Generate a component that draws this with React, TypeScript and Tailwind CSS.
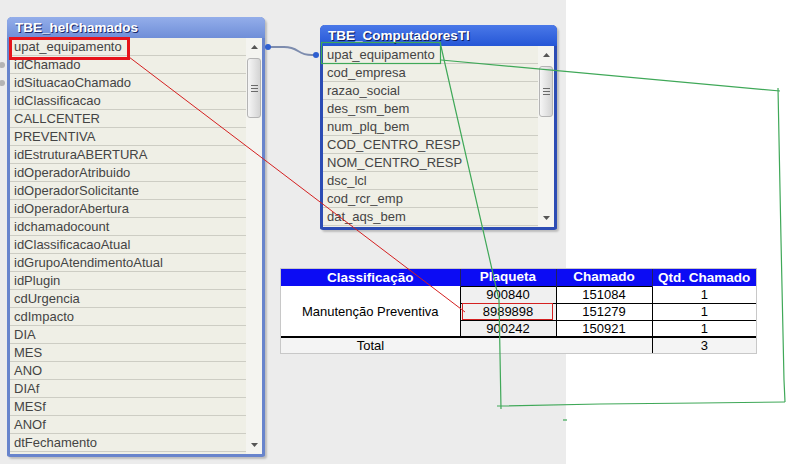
import React from 'react';

const helFields = [
  'upat_equipamento',
  'idChamado',
  'idSituacaoChamado',
  'idClassificacao',
  'CALLCENTER',
  'PREVENTIVA',
  'idEstruturaABERTURA',
  'idOperadorAtribuido',
  'idOperadorSolicitante',
  'idOperadorAbertura',
  'idchamadocount',
  'idClassificacaoAtual',
  'idGrupoAtendimentoAtual',
  'idPlugin',
  'cdUrgencia',
  'cdImpacto',
  'DIA',
  'MES',
  'ANO',
  'DIAf',
  'MESf',
  'ANOf',
  'dtFechamento',
];

const compFields = [
  'upat_equipamento',
  'cod_empresa',
  'razao_social',
  'des_rsm_bem',
  'num_plq_bem',
  'COD_CENTRO_RESP',
  'NOM_CENTRO_RESP',
  'dsc_lcl',
  'cod_rcr_emp',
  'dat_aqs_bem',
];

const rows = [
  { plaqueta: '900840', chamado: '151084', qtd: '1' },
  { plaqueta: '8989898', chamado: '151279', qtd: '1' },
  { plaqueta: '900242', chamado: '150921', qtd: '1' },
];

function Arrow({ down }: { down?: boolean }) {
  return (
    <svg width="7" height="4" viewBox="0 0 7 4">
      {down ? <polygon points="0,0 7,0 3.5,4" fill="#555" /> : <polygon points="0,4 7,4 3.5,0" fill="#555" />}
    </svg>
  );
}

function Scrollbar({ thumbClass }: { thumbClass: string }) {
  return (
    <div className="w-[16px] shrink-0 flex flex-col bg-[#f4f4f0]">
      <div className="h-[18px] flex items-center justify-center">
        <Arrow />
      </div>
      <div className={`mx-[1px] mt-[2px] rounded-[3px] border border-[#b4b4b4] bg-gradient-to-r from-[#f6f6f6] to-[#d4d4d4] flex flex-col items-center justify-center gap-[2px] ${thumbClass}`}>
        <div className="w-[7px] h-px bg-[#6a6a6a]" />
        <div className="w-[7px] h-px bg-[#6a6a6a]" />
        <div className="w-[7px] h-px bg-[#6a6a6a]" />
      </div>
      <div className="flex-1" />
      <div className="h-[18px] flex items-center justify-center">
        <Arrow down />
      </div>
    </div>
  );
}

function FieldList({ fields }: { fields: string[] }) {
  return (
    <div className="flex-1 overflow-hidden">
      {fields.map((f) => (
        <div
          key={f}
          className="h-[18px] border-b border-[#cdcdc4] pl-[4px] pt-[1px] text-[13px] leading-[16px] text-[#444444] whitespace-nowrap"
        >
          {f}
        </div>
      ))}
    </div>
  );
}

export default function App() {
  return (
    <div className="relative w-[794px] h-[464px] flex overflow-hidden bg-white font-['Liberation_Sans',Arial,sans-serif]">
      {/* workspace backdrop */}
      <div className="w-[566px] h-full bg-[#ececec]" />
      <div className="flex-1 bg-white" />

      {/* TBE_helChamados */}
      <div className="absolute left-[7px] top-[17px] w-[258px] h-[440px] flex flex-col rounded-t-[5px] rounded-b-[3px] border-x-[3px] border-b-[3px] border-[#6884cc] bg-[#efefe6] shadow-[2px_2px_2px_rgba(0,0,0,0.2)]">
        <div className="h-[21px] -mx-[3px] px-[8px] rounded-t-[5px] bg-gradient-to-b from-[#94aeea] to-[#6f8ed8] text-white font-bold text-[13.5px] leading-[22px] [text-shadow:1px_1px_0_#1c2c6c]">
          TBE_helChamados
        </div>
        <div className="flex-1 flex min-h-0">
          <FieldList fields={helFields} />
          <Scrollbar thumbClass="h-[60px]" />
        </div>
      </div>

      {/* TBE_ComputadoresTI */}
      <div className="absolute left-[320px] top-[25px] w-[237px] h-[205px] flex flex-col rounded-t-[5px] rounded-b-[3px] border-x-[3px] border-b-[3px] border-[#2c4cb4] bg-[#efefe6] shadow-[2px_2px_2px_rgba(0,0,0,0.2)]">
        <div className="h-[21px] -mx-[3px] px-[8px] rounded-t-[5px] bg-gradient-to-b from-[#4a78e8] to-[#2556d6] text-white font-bold text-[13.5px] leading-[22px] [text-shadow:1px_1px_0_#0c1c5c]">
          TBE_ComputadoresTI
        </div>
        <div className="flex-1 flex min-h-0">
          <FieldList fields={compFields} />
          <Scrollbar thumbClass="h-[51px]" />
        </div>
      </div>

      {/* pivot table */}
      <div className="absolute left-[280px] top-[268px] w-[477px] border border-[#c8c8c8] bg-white">
        <table className="w-full border-collapse text-[13px] text-black table-fixed">
          <colgroup>
            <col className="w-[179px]" />
            <col className="w-[96px]" />
            <col className="w-[96px]" />
            <col className="w-[104px]" />
          </colgroup>
          <thead>
            <tr className="h-[17px] bg-[#0c0cf4] text-white font-bold text-[13.5px] leading-[16px]">
              <th className="border-r border-[#202060] font-bold">Classificação</th>
              <th className="border-r border-[#202060] font-bold">Plaqueta</th>
              <th className="border-r border-[#202060] font-bold">Chamado</th>
              <th className="font-bold">Qtd. Chamado</th>
            </tr>
          </thead>
          <tbody>
            {rows.map((r, i) => (
              <tr key={r.plaqueta} className="h-[17px] leading-[15px] text-center">
                {i === 0 && (
                  <td rowSpan={3} className="border-r border-black text-center">
                    Manutenção Preventiva
                  </td>
                )}
                <td className="border border-black bg-[#f0f0f0]">{r.plaqueta}</td>
                <td className="border border-black">{r.chamado}</td>
                <td className="border-b border-black">{r.qtd}</td>
              </tr>
            ))}
            <tr className="h-[16px] leading-[15px] text-center bg-[#f4f4f4] border-t-2 border-black">
              <td>Total</td>
              <td />
              <td />
              <td className="border-l border-black">3</td>
            </tr>
          </tbody>
        </table>
      </div>

      {/* connectors and annotations */}
      <svg className="absolute inset-0 pointer-events-none" width="794" height="464" viewBox="0 0 794 464">
        <circle cx="2" cy="65" r="3" fill="#b4b4b4" />
        <circle cx="2" cy="83" r="3" fill="#b4b4b4" />

        <path d="M268 47 L284 47 Q292 47 298 51 Q304 55 312 55 L316 55" fill="none" stroke="#7d8cae" strokeWidth="2" />
        <circle cx="268" cy="47" r="3" fill="#2f5fd0" />
        <circle cx="316" cy="55" r="3" fill="#2f5fd0" />

        <rect x="10.5" y="38.5" width="118" height="20" fill="none" stroke="#e6141c" strokeWidth="3" />
        <line x1="129" y1="57" x2="465" y2="312" stroke="#d42020" strokeWidth="1" />
        <rect x="462.5" y="303.5" width="90" height="16" fill="none" stroke="#d42020" strokeWidth="1" />

        <g fill="none" stroke="#3fa858" strokeWidth="1.2">
          <rect x="321.5" y="42.5" width="119" height="21" />
          <polyline points="441,60 780,91" />
          <polyline points="778,88 781,240 784,380 785,402" />
          <polyline points="785,402 700,403 600,404 500,406 497,406" />
          <polyline points="440,42 499,300 501,409" />
          <line x1="563" y1="420" x2="567" y2="420" />
        </g>
      </svg>
    </div>
  );
}
